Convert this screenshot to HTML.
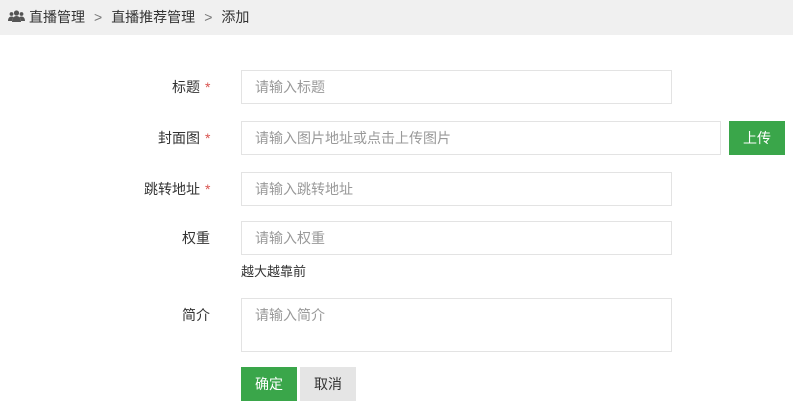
<!DOCTYPE html>
<html><head><meta charset="utf-8"><style>
*{margin:0;padding:0;box-sizing:border-box}
body{width:793px;height:416px;background:#fff;font-family:"Liberation Sans","Noto Sans CJK SC",sans-serif;font-size:14px;color:#333;position:relative;overflow:hidden}
.hd{position:absolute;left:0;top:0;width:793px;height:35px;background:#f0f0f0;line-height:35px;padding-left:8px;font-size:14px;color:#333}
.hd .s{color:#777;margin:0 9px}
.lab{position:absolute;text-align:right;width:200px;left:0;line-height:34px}
.lab.n{width:210px}
.lab i{font-style:normal;color:#d9534f;position:absolute;left:205px}
.inp{position:absolute;left:241px;height:34px;border:1px solid #e3e3e3;color:#999;line-height:32px;padding-left:13px;font-size:14px}
.btn{position:absolute;height:34px;line-height:34px;text-align:center;font-size:14px}
</style></head><body>
<div class="hd"><svg width="17" height="13" viewBox="0 0 17 13" style="vertical-align:-1px;margin-right:4px"><g fill="#555"><circle cx="8.5" cy="3" r="2.6"/><circle cx="3.5" cy="4" r="1.9"/><circle cx="13.5" cy="4" r="1.9"/><path d="M4 12c0-4 2-6 4.5-6s4.5 2 4.5 6z"/><path d="M0 11c0-3 1.5-4.5 3.5-4.5 1 0 1.5.3 2 .7C4.5 8.5 4 10 4 11z"/><path d="M17 11c0-3-1.5-4.5-3.5-4.5-1 0-1.5.3-2 .7 1 1.3 1.5 2.8 1.5 3.8z"/></g></svg>直播管理<span class="s">&gt;</span>直播推荐管理<span class="s">&gt;</span>添加</div>

<div class="lab" style="top:70px">标题<i>*</i></div>
<div class="inp" style="top:70px;width:431px">请输入标题</div>

<div class="lab" style="top:121px">封面图<i>*</i></div>
<div class="inp" style="top:121px;width:480px">请输入图片地址或点击上传图片</div>
<div class="btn" style="top:121px;left:729px;width:56px;background:#3aa64a;color:#fff">上传</div>

<div class="lab" style="top:172px">跳转地址<i>*</i></div>
<div class="inp" style="top:172px;width:431px">请输入跳转地址</div>

<div class="lab n" style="top:221px">权重</div>
<div class="inp" style="top:221px;width:431px">请输入权重</div>
<div style="position:absolute;left:241px;top:261px;font-size:13px;color:#333">越大越靠前</div>

<div class="lab n" style="top:298px">简介</div>
<div class="inp" style="top:298px;width:431px;height:54px;line-height:20px;padding-top:6px">请输入简介</div>

<div class="btn" style="top:367px;left:241px;width:56px;background:#3aa64a;color:#fff">确定</div>
<div class="btn" style="top:367px;left:300px;width:56px;background:#e5e5e5;color:#333">取消</div>
</body></html>
